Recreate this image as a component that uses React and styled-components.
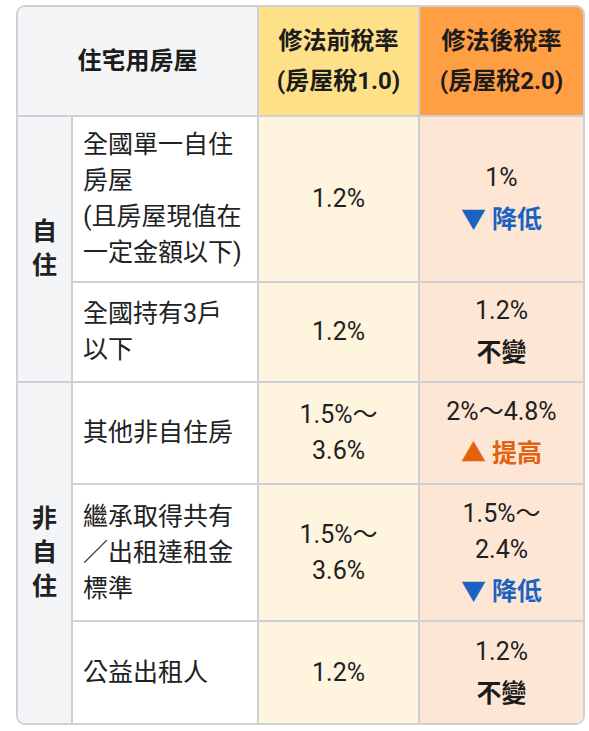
import React from "react";
import styled, { createGlobalStyle } from "styled-components";

const GlobalStyle = createGlobalStyle`
  html, body {
    margin: 0;
    padding: 0;
    background: #ffffff;
  }
  body {
    font-family: Roboto, "Noto Sans CJK TC", sans-serif;
    color: #202122;
  }
`;

const line = "#cdd1d6";

const Page = styled.div`
  padding: 5px 0 0 16px;
`;

const Table = styled.table`
  width: 569px;
  table-layout: fixed;
  border-collapse: separate;
  border-spacing: 0;
  border: 2px solid ${line};
  border-radius: 9px;
  overflow: hidden;
`;

const Row = styled.tr`
  height: ${props => props.$h}px;
`;

const tones = {
  gray: "#f3f5f7",
  white: "#ffffff",
  yellow: "#fee089",
  orange: "#ff9e42",
  cream: "#fff5df",
  peach: "#fee6d5"
};

const Cell = styled.td`
  padding: 0 10px;
  background: ${props => tones[props.$tone]};
  border-right: 2px solid ${line};
  border-bottom: ${props => (props.$end ? "0" : `2px solid ${line}`)};
  font-size: 25px;
  line-height: 36px;
  vertical-align: middle;
  text-align: center;
  &:last-child {
    border-right: 0;
  }
`;

const HeadCell = styled(Cell).attrs({ as: "th" })`
  font-size: 24px;
  line-height: 40px;
  font-weight: 700;
  color: #1c1c1c;
`;

const Category = styled(Cell)`
  padding: 0;
  font-weight: 700;
  line-height: 34px;
`;

const Label = styled(Cell)`
  text-align: left;
`;

const Status = styled.div`
  margin-top: 6px;
  font-weight: 700;
  color: ${props =>
    props.$dir === "down" ? "#1b63c2" : props.$dir === "up" ? "#e2620f" : "#1c1c1c"};
`;

const statusText = {
  down: "▼ 降低",
  up: "▲ 提高",
  same: "不變"
};

const rows = [
  {
    h: 166,
    label: ["全國單一自住", "房屋", "(且房屋現值在", "一定金額以下)"],
    before: ["1.2%"],
    after: ["1%"],
    dir: "down",
    category: { text: ["自", "住"], span: 2 }
  },
  {
    h: 100,
    label: ["全國持有3戶", "以下"],
    before: ["1.2%"],
    after: ["1.2%"],
    dir: "same"
  },
  {
    h: 102,
    label: ["其他非自住房"],
    before: ["1.5%～", "3.6%"],
    after: ["2%～4.8%"],
    dir: "up",
    category: { text: ["非", "自", "住"], span: 3 }
  },
  {
    h: 137,
    label: ["繼承取得共有", "／出租達租金", "標準"],
    before: ["1.5%～", "3.6%"],
    after: ["1.5%～", "2.4%"],
    dir: "down"
  },
  {
    h: 101,
    label: ["公益出租人"],
    before: ["1.2%"],
    after: ["1.2%"],
    dir: "same"
  }
];

const Lines = ({ items }) =>
  items.map((text, i) => (
    <React.Fragment key={i}>
      {i > 0 && <br />}
      {text}
    </React.Fragment>
  ));

const App = () => {
  return (
    <Page>
      <GlobalStyle />
      <Table>
        <colgroup>
          <col style={{ width: 55 }} />
          <col style={{ width: 186 }} />
          <col style={{ width: 161 }} />
          <col />
        </colgroup>
        <thead>
          <Row $h={110}>
            <HeadCell $tone="gray" colSpan={2}>住宅用房屋</HeadCell>
            <HeadCell $tone="yellow">
              修法前稅率<br />(房屋稅1.0)
            </HeadCell>
            <HeadCell $tone="orange">
              修法後稅率<br />(房屋稅2.0)
            </HeadCell>
          </Row>
        </thead>
        <tbody>
          {rows.map((row, i) => {
            const last = i === rows.length - 1;
            return (
              <Row key={i} $h={row.h}>
                {row.category && (
                  <Category $tone="gray" rowSpan={row.category.span} $end={i + row.category.span === rows.length}>
                    <Lines items={row.category.text} />
                  </Category>
                )}
                <Label $tone="white" $end={last}>
                  <Lines items={row.label} />
                </Label>
                <Cell $tone="cream" $end={last}>
                  <Lines items={row.before} />
                </Cell>
                <Cell $tone="peach" $end={last}>
                  <Lines items={row.after} />
                  <Status $dir={row.dir}>{statusText[row.dir]}</Status>
                </Cell>
              </Row>
            );
          })}
        </tbody>
      </Table>
    </Page>
  );
};

export default App;
